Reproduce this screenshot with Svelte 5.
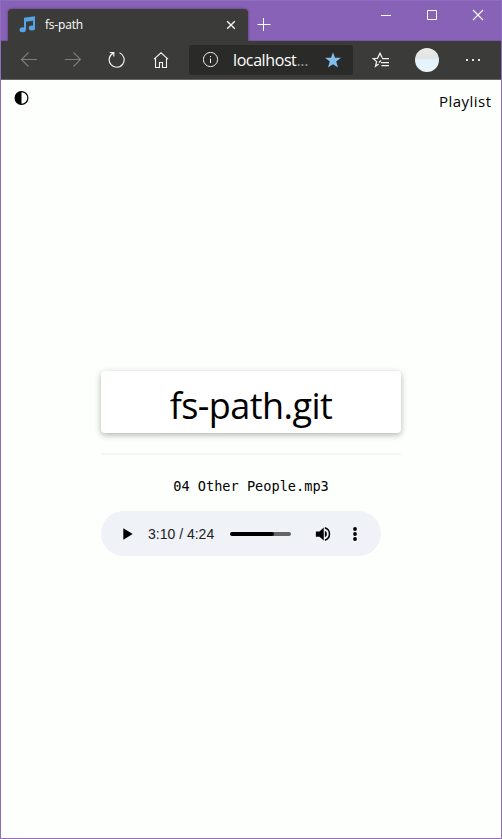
<script>
  const track = '04 Other People.mp3';
  const elapsed = 190;
  const duration = 264;
  const progress = 72;
  const clock = (s) => `${Math.floor(s / 60)}:${String(s % 60).padStart(2, '0')}`;
</script>

<div class="window">
  <header class="titlebar">
    <div class="tab">
      <svg class="note" width="18" height="18" viewBox="0 0 18 18"><path d="M5 1.7 16 .2v12h-2V4.8L7 5.8v7.8H5z" fill="#55a3e8"/><ellipse cx="3.7" cy="13.8" rx="3.2" ry="2.5" fill="#55a3e8"/><ellipse cx="12.9" cy="12.1" rx="3.2" ry="2.5" fill="#55a3e8"/></svg>
      <span class="tabname">fs-path</span>
      <svg class="close" width="10" height="10" viewBox="0 0 10 10"><path d="m1.2 1.2 7.6 7.6m0-7.6L1.2 8.8" stroke="#f3f3f3" stroke-width="1.4"/></svg>
    </div>
    <svg class="plus" width="14" height="14" viewBox="0 0 14 14"><path d="M.5 7.5h13M6.5 1v13" stroke="#fff" fill="none"/></svg>
    <div class="controls">
      <span><svg width="12" height="12" viewBox="0 0 12 12"><path d="M1 6.5h10" stroke="#fff"/></svg></span>
      <span><svg width="12" height="12" viewBox="0 0 12 12"><path d="M1.5 1.5h9v9h-9z" stroke="#fff" fill="none"/></svg></span>
      <span><svg width="12" height="12" viewBox="0 0 12 12"><path d="m1 1 10 10M11 1 1 11" stroke="#fff" stroke-width="1.1"/></svg></span>
    </div>
  </header>

  <nav class="toolbar">
    <span class="btn"><svg width="18" height="18" viewBox="0 0 18 18"><path d="M17 8.5H1.5M8.5 1.5l-7 7 7 7" stroke="#7d7e7b" fill="none" stroke-width="1.1"/></svg></span>
    <span class="btn"><svg width="18" height="18" viewBox="0 0 18 18"><path d="M1 8.5h15.5m-7-7 7 7-7 7" stroke="#7d7e7b" fill="none" stroke-width="1.1"/></svg></span>
    <span class="btn"><svg width="18" height="18" viewBox="0 0 18 18"><path d="M11.5 1.8A7.5 7.5 0 1 1 5.2 2.1M1.8 1.5h4v4" stroke="#f2f2f2" fill="none" stroke-width="1.2"/></svg></span>
    <span class="btn"><svg width="18" height="18" viewBox="0 0 18 18"><path d="M2 8.2 9 1.8l7 6.4M3.5 7v9.5h4v-5h3v5h4V7" stroke="#f2f2f2" fill="none" stroke-width="1.1"/></svg></span>
    <div class="address">
      <svg width="16" height="16" viewBox="0 0 16 16"><circle cx="7.5" cy="7.5" r="7.1" stroke="#eee" fill="none"/><path d="M7.5 6.5v4.5M7.5 4v1" stroke="#fff"/></svg>
      <span class="host">localhost<i>...</i></span>
      <svg class="star" width="16" height="16" viewBox="0 0 16 16"><path d="m8 .2 2 5.5 6 .1-4.8 3.7 1.8 6.1L8 12.2l-5 3.4 1.8-6.1L0 5.8l6-.1z" fill="#82bdee"/></svg>
    </div>
    <div class="actions">
      <span><svg width="18" height="18" viewBox="0 0 18 18"><path d="m6.7 13-3.2 2.3 1.1-4.7L1.3 7.5l4.2-.2L8 2.2l2.2 4.6M10 7.5h7M9 11.5h8M9.5 14.5H17M9 9.5l-2 2" stroke="#f2f2f2" fill="none" stroke-width="1.25"/></svg></span>
      <span><b class="avatar"></b></span>
      <span><svg width="16" height="4" viewBox="0 0 16 4"><path d="M1 1h2v2H1zm6 0h2v2H7zm6 0h2v2h-2z" fill="#e4e4e4"/></svg></span>
    </div>
  </nav>

  <main>
    <div class="pagebar">
      <svg width="16" height="16" viewBox="0 0 16 16"><circle cx="8.5" cy="8" r="6.4" fill="#fff" stroke="#000" stroke-width="1.2"/><path d="M8.5 1.6a6.4 6.4 0 0 0 0 12.8z"/></svg>
      <span class="playlist">Playlist</span>
    </div>
    <section>
      <h1><span>fs-path.git</span></h1>
      <hr />
      <p>{track}</p>
      <div class="player">
        <svg class="play" width="10" height="12" viewBox="0 0 10 12"><path d="M.3.2 9.7 6 .3 11.8z"/></svg>
        <span class="time">{clock(elapsed)} / {clock(duration)}</span>
        <div class="bar"><div style="width:{progress}%"></div></div>
        <svg class="volume" width="18" height="18" viewBox="0 0 24 24"><path d="M2.5 8.5v7h4.8l5.7 5.3V3.2L7.3 8.5zM14.5 7.6v8.8a4.9 4.9 0 0 0 0-8.8zm0-4.8v2.3a7.2 7.2 0 0 1 0 13.8v2.3a9.5 9.5 0 0 0 0-18.4z"/></svg>
        <svg class="dots" width="4" height="14" viewBox="0 0 4 14"><circle cx="2" cy="2" r="1.9"/><circle cx="2" cy="7" r="1.9"/><circle cx="2" cy="12" r="1.9"/></svg>
      </div>
    </section>
  </main>
</div>

<style>
  .window { box-sizing: border-box; width: 502px; height: 839px; border: 1px solid #906dc1; background: #fdfffd; display: flex; flex-direction: column; overflow: hidden; font-family: "Open Sans", "Noto Sans", sans-serif; color: #000; }
  svg { display: block; flex: none; }
  .titlebar { height: 40px; flex: none; box-sizing: border-box; background: #8862b6; display: flex; padding-left: 7px; box-shadow: inset 0 -1px #7a54a5; }
  .tab { box-sizing: border-box; width: 240px; height: 32px; margin-top: 8px; border-radius: 4px 4px 0 0; background: #3b3c39; display: flex; align-items: center; padding: 0 12px 0 11px; box-shadow: 0 0 3px #52386f; clip-path: inset(-3px -3px 0 -3px); }
  .tabname { margin-left: 8px; flex: 1; color: #fff; font-size: 12px; line-height: 16px; letter-spacing: -.2px; }
  .plus { margin: 16px 0 0 9px; }
  .controls { margin-left: auto; display: flex; height: 28px; }
  .controls span, .actions span { width: 46px; display: flex; align-items: center; justify-content: center; }
  .toolbar { height: 39px; flex: none; box-sizing: border-box; background: #3b3c39; border-bottom: 1px solid #666764; display: flex; align-items: center; padding-left: 6px; }
  .btn { width: 44px; display: flex; justify-content: center; }
  .address { box-sizing: border-box; width: 164px; height: 30px; margin-left: 6px; border-radius: 3px; background: #2a2b29; display: flex; align-items: center; padding: 0 12px 0 14px; }
  .host { margin-left: 14px; flex: 1; color: #fff; font-size: 16px; letter-spacing: -.4px; white-space: nowrap; line-height: 22px; }
  .host i { font-style: normal; color: #999; letter-spacing: -.3px; }
  .actions { display: flex; margin-left: 5px; }
  .avatar { width: 24px; height: 24px; border-radius: 50%; background: linear-gradient(#ececec 0, #e4e5e5 30%, #dfe4e6 42%, #e4f2fb 50%, #e9f6ff); }
  .pagebar { display: flex; justify-content: space-between; padding: 10px 10px 0 12px; }
  .playlist { font-size: 15px; line-height: 22px; letter-spacing: .45px; margin-right: -.45px; }
  section { width: 300px; margin: 259px auto 0; }
  h1 { margin: 0; height: 62px; border-radius: 4px; background: #fefffe; box-shadow: 0 2px 6px rgba(0,0,0,.3); display: flex; justify-content: center; font-size: 36px; font-weight: 400; line-height: 69px; letter-spacing: -.55px; }
  hr { border: 0; height: 2px; margin: 20px 0 0; background: #f4f5f4; }
  p { margin: 21px 0 0; text-align: center; font: 13.6px/20px "DejaVu Sans Mono", monospace; white-space: nowrap; }
  .player { box-sizing: border-box; width: 280px; height: 45px; margin-top: 15px; border-radius: 23px; background: #eff2f6; display: flex; align-items: center; padding-left: 22px; }
  .time { width: 68px; margin-left: 15px; font: 14px/18px "Liberation Sans", sans-serif; color: #202124; white-space: nowrap; }
  .bar { width: 61px; height: 4px; margin-left: 14px; border-radius: 2px; background: #646567; overflow: hidden; }
  .bar div { height: 4px; background: #000; border-radius: 2px; }
  .volume { margin-left: 23px; }
  .dots { margin-left: 21px; }
</style>
